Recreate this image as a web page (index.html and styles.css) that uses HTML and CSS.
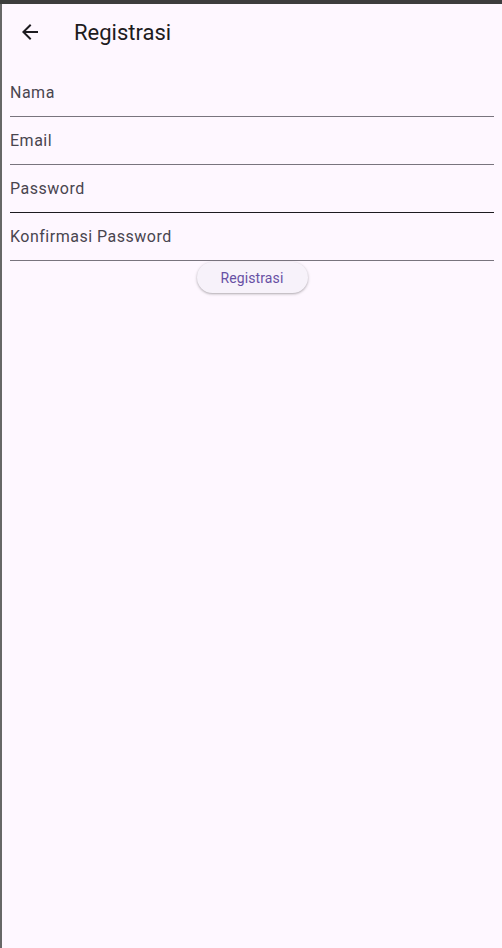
FILE: index.html
```html
<!DOCTYPE html>
<html>
<head>
<meta charset="utf-8">
<link rel="stylesheet" href="styles.css">
</head>
<body>
<div class="topbar"></div>
<div class="screen">
  <header class="appbar">
    <button class="back" aria-label="Back">
      <svg width="24" height="24" viewBox="0 0 24 24"><path d="M20 11H7.83l5.59-5.59L12 4l-8 8 8 8 1.41-1.41L7.83 13H20v-2z" fill="#1d1b20"/></svg>
    </button>
    <h1 class="title">Registrasi</h1>
  </header>
  <main class="form">
    <div class="field"><span class="label">Nama</span></div>
    <div class="field"><span class="label">Email</span></div>
    <div class="field focus"><span class="label">Password</span></div>
    <div class="field"><span class="label">Konfirmasi Password</span></div>
    <div class="actions"><button class="btn">Registrasi</button></div>
  </main>
</div>
</body>
</html>
```
FILE: styles.css
```css
html, body {
  margin: 0;
  padding: 0;
  height: 100%;
}
body {
  background: #fef7ff;
  font-family: Roboto, "Noto Sans", sans-serif;
  display: flex;
  flex-direction: column;
}
.topbar {
  height: 4px;
  background: #3d3d3d;
  flex: none;
}
.screen {
  flex: 1;
  border-left: 2px solid #676767;
  display: flex;
  flex-direction: column;
}
.appbar {
  height: 56px;
  display: flex;
  align-items: center;
}
.back {
  width: 48px;
  height: 48px;
  margin-left: 4px;
  border: none;
  background: none;
  padding: 0;
  display: flex;
  align-items: center;
  justify-content: center;
}
.title {
  margin: 0 0 0 20px;
  font-size: 22px;
  font-weight: 400;
  color: #1d1b20;
}
.form {
  padding: 9px 8px 0 8px;
  display: flex;
  flex-direction: column;
}
.field {
  height: 47px;
  border-bottom: 1px solid #79747e;
  display: flex;
  align-items: center;
}
.field.focus {
  border-bottom-color: #1d1b20;
}
.label {
  font-size: 16px;
  letter-spacing: 0.5px;
  color: #49454f;
}
.actions {
  display: flex;
  justify-content: center;
  padding-top: 1px;
}
.btn {
  height: 31px;
  width: 111px;
  border: none;
  border-radius: 16px;
  background: #f7f2fa;
  color: #6750a4;
  font-family: Roboto, sans-serif;
  font-size: 14px;
  font-weight: 400;
  letter-spacing: 0.1px;
  box-shadow: 0 1px 2px rgba(0,0,0,0.22), 0 1px 3px 1px rgba(0,0,0,0.08);
}
```
